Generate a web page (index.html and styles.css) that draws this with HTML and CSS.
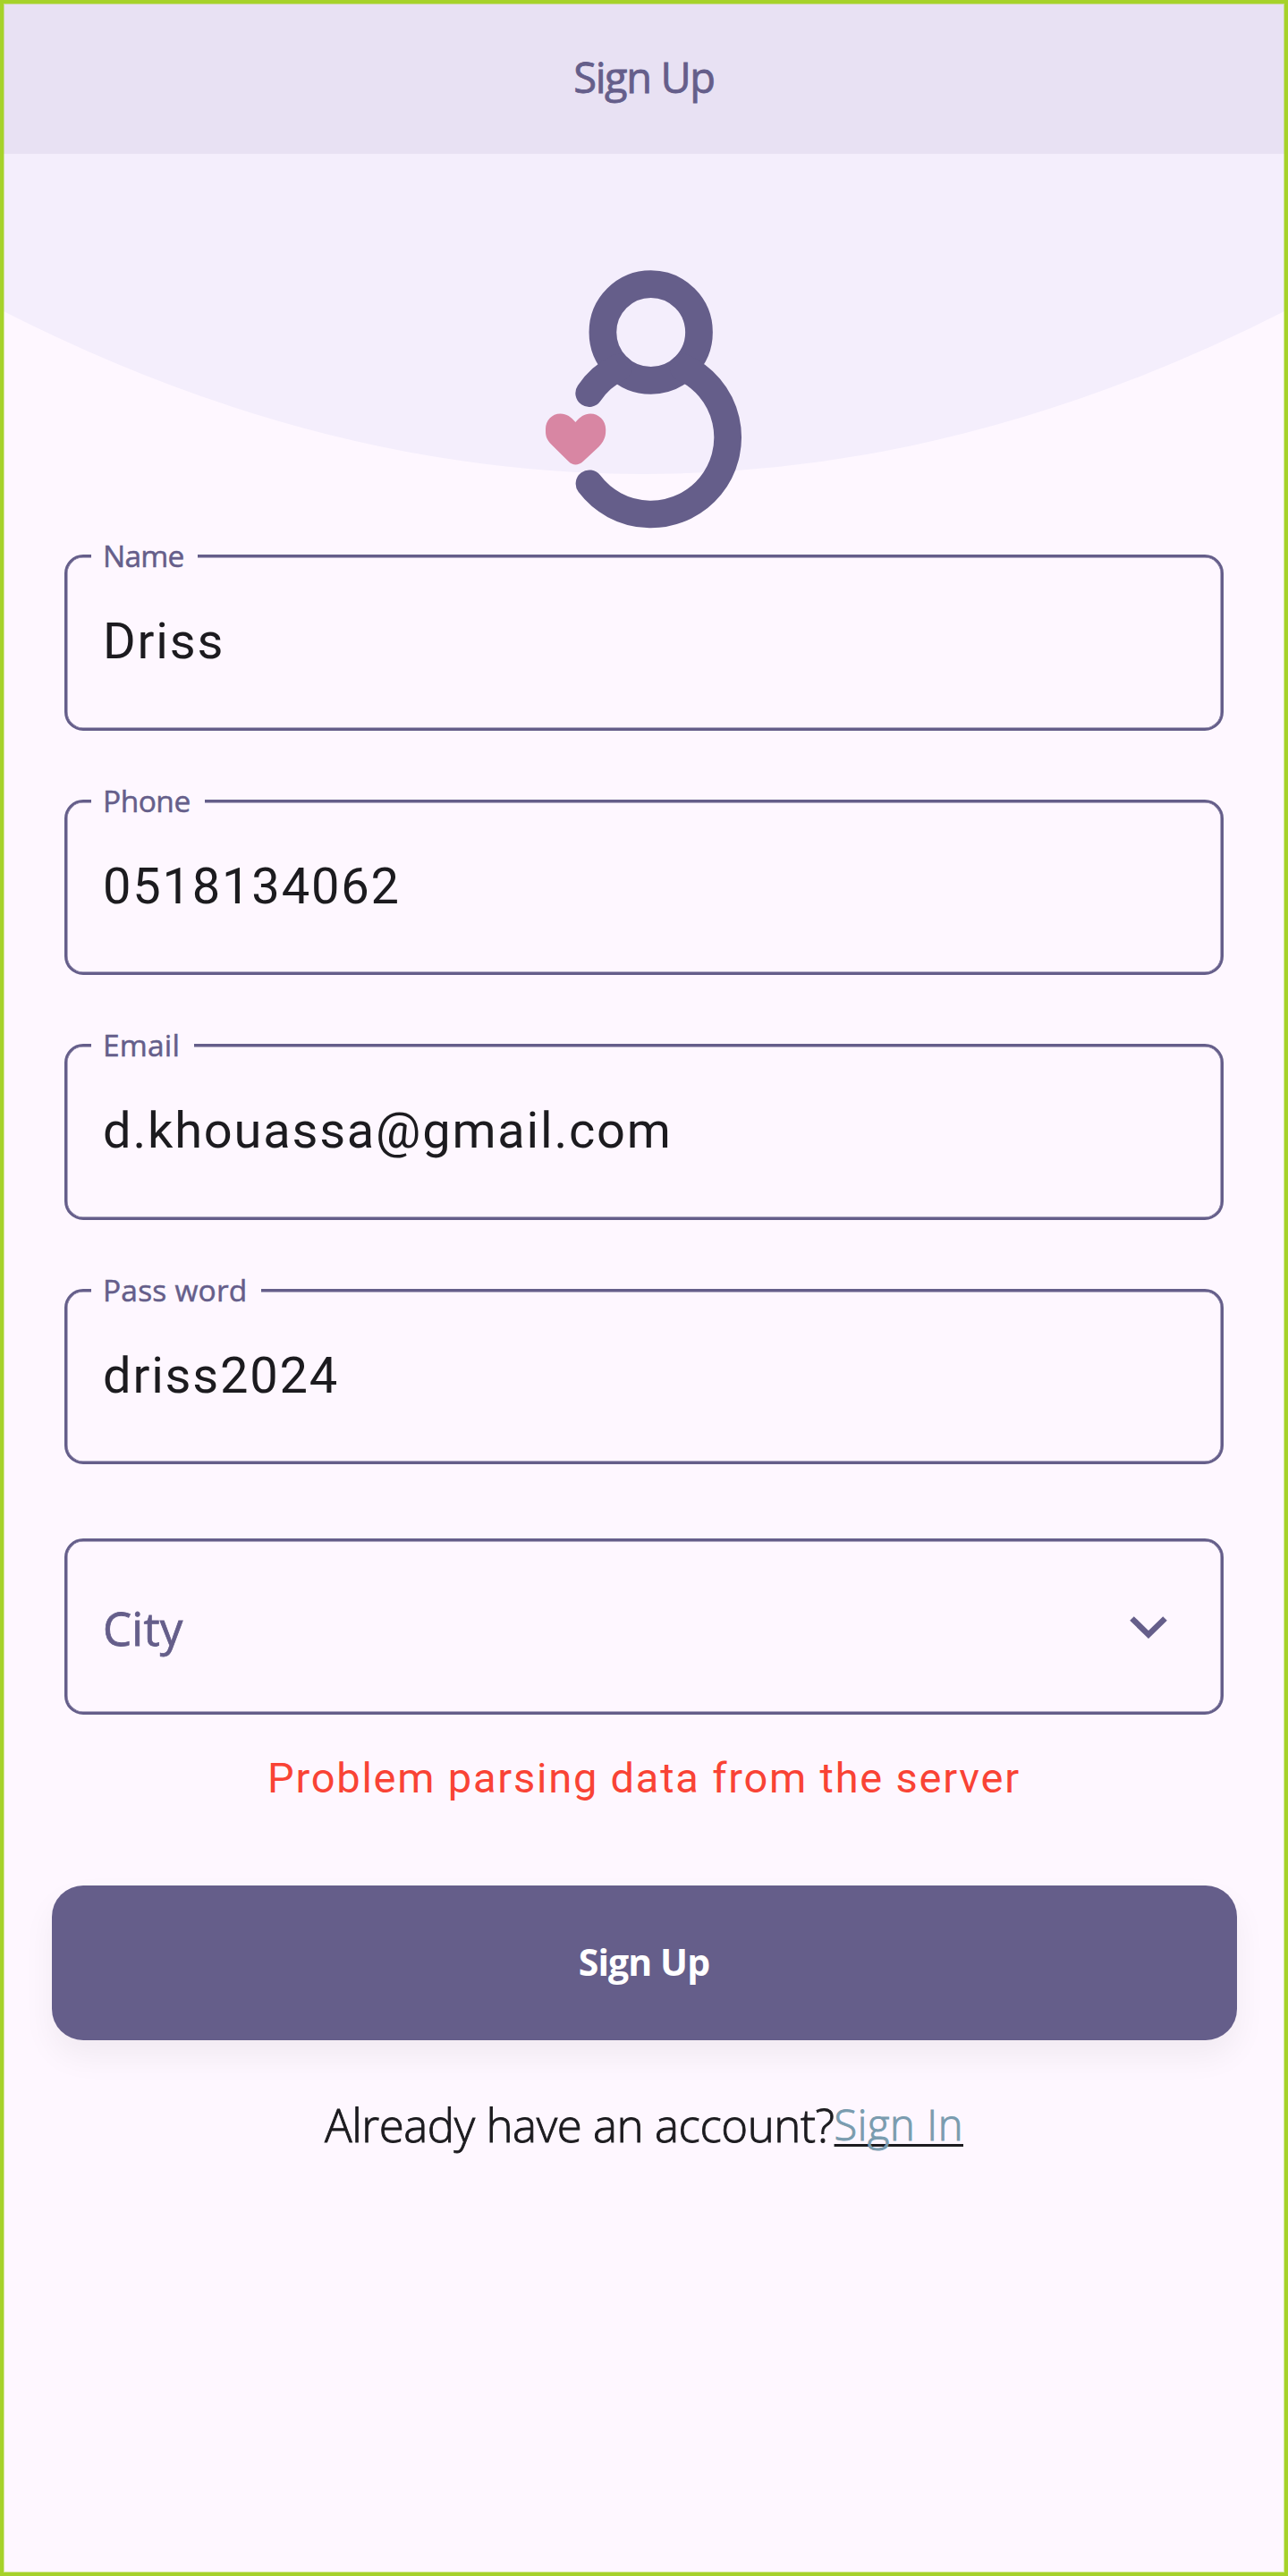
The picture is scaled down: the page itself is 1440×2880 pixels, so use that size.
FILE: index.html
```html
<!DOCTYPE html>
<html lang="en">
<head>
<meta charset="utf-8">
<title>Sign Up</title>
<link rel="stylesheet" href="styles.css">
</head>
<body>
<main class="screen">
  <svg class="backdrop" width="1440" height="540" viewBox="0 0 1440 540"><path d="M0 0H1440V346Q720 714 0 346Z" fill="#f4eefc"/></svg>
  <header class="topbar"><h1 class="title">Sign Up</h1></header>
  <svg class="logo" width="240" height="300" viewBox="600 295 240 300" fill="none">
    <g stroke="#655e8a" stroke-width="30.7" stroke-linecap="round">
      <circle cx="727.7" cy="371.5" r="53.8"/>
      <path d="M658.7 439.600A86 86 0 0 1 691.300 411.100M764.100 411.100A86 86 0 1 1 659 540.800"/>
    </g>
    <path fill="#d886a3" d="M643.4 472C638.5 466 633.5 462.4 626.5 462.4C617 462.4 610 470 610 479.5V482C610 488 611.5 491.5 616 496.500L635.500 515.800C640.500 520.800 646.500 520.800 652 515.800L669.500 499.500C674.500 494 677.200 489 677.200 482V479.500C677.200 470 669.500 462.400 660 462.400C653.500 462.400 648.300 466 643.400 472Z"/>
  </svg>
  <form class="form">
    <div class="field"><label class="label name">Name</label><span class="value">Driss</span></div>
    <div class="field"><label class="label phone">Phone</label><span class="value">0518134062</span></div>
    <div class="field"><label class="label email">Email</label><span class="value">d.khouassa@gmail.com</span></div>
    <div class="field"><label class="label password">Pass word</label><span class="value">driss2024</span></div>
    <div class="field select"><span class="placeholder">City</span>
      <svg class="chevron" width="44" height="28" viewBox="0 0 44 28"><path d="M3.500 3.500L22 21.500L40.500 3.500" fill="none" stroke="#655e8a" stroke-width="6.500"/></svg>
    </div>
  </form>
  <p class="error">Problem parsing data from the server</p>
  <button class="submit" type="button">Sign Up</button>
  <p class="signin"><span class="question">Already have an account?</span><a class="link">Sign In</a></p>
</main>
</body>
</html>
```
FILE: styles.css
```css
* { box-sizing: border-box; margin: 0; padding: 0; }
body { background: #fef7ff; }
.screen {
  position: relative;
  display: flex;
  flex-direction: column;
  width: 1440px;
  height: 2880px;
  overflow: hidden;
  background: #fef7ff;
  font-family: "Open Sans", "Noto Sans", sans-serif;
  color: #655e8a;
}
/* Frame drawn over the screen edges */
.screen::after {
  content: "";
  position: absolute;
  inset: 0;
  border: 4px solid #a6d22a;
  box-shadow: inset 0 0 0 1px rgba(166, 210, 42, .45);
  pointer-events: none;
}
.backdrop { position: absolute; top: 0; left: 0; }
.topbar {
  position: relative;
  display: flex;
  justify-content: center;
  height: 172px;
  padding-top: 53px;
  background: #e8e1f3;
}
.title {
  font-size: 47px;
  line-height: 66px;
  font-weight: 400;
  letter-spacing: -1.400px;
  white-space: nowrap;
  -webkit-text-stroke: .8px currentColor;
}
.logo { position: relative; display: block; margin: 123px 0 0 600px; }
.form { display: flex; flex-direction: column; gap: 77px; margin: 25px 72px 0; }
.field {
  position: relative;
  display: flex;
  align-items: center;
  height: 196.500px;
  padding: 0 0 2px 40px;
  border: 3px solid #655e8a;
  border-radius: 21px;
  box-shadow: inset 0 0 0 .5px #655e8a;
}
.label {
  position: absolute;
  top: -25px;
  left: 27px;
  height: 46px;
  padding-left: 13px;
  background: #fef7ff;
  font-size: 33.500px;
  line-height: 46px;
  font-weight: 400;
  white-space: nowrap;
  -webkit-text-stroke: .5px currentColor;
}
.name { width: 119px; letter-spacing: -.8px; }
.phone { width: 127px; letter-spacing: -.5px; }
.email { width: 115px; letter-spacing: .2px; }
.password { width: 190px; letter-spacing: .2px; }
.value { color: #1c1b1f; font: 56px/66px Roboto, sans-serif; letter-spacing: 1.800px; }
.select { justify-content: space-between; margin-top: 6px; padding: 3px 59px 0 40px; }
.placeholder {
  font-size: 51px;
  line-height: 68px;
  font-weight: 400;
  letter-spacing: .2px;
  -webkit-text-stroke: .8px currentColor;
}
.chevron { display: block; }
.error {
  margin-top: 43px;
  color: #f94335;
  font: 47px/56px Roboto, sans-serif;
  letter-spacing: 1.780px;
  text-align: center;
}
.submit {
  height: 173px;
  margin: 92.500px 57.500px 0;
  padding-bottom: 3px;
  border: 0;
  border-radius: 35px;
  background: #655e8a;
  box-shadow: 0 18px 36px rgba(0, 0, 0, .055);
  color: #fff;
  font: 700 41px/56px "Open Sans", sans-serif;
  letter-spacing: -.9px;
}
.signin { display: flex; align-items: baseline; justify-content: center; margin-top: 59px; white-space: nowrap; }
.question {
  color: #1c1b1f;
  font-size: 51px;
  line-height: 70px;
  font-weight: 300;
  letter-spacing: -.45px;
  -webkit-text-stroke: .9px currentColor;
}
.link {
  position: relative;
  top: -2px;
  color: #7a9caf;
  font-size: 47px;
  font-weight: 300;
  letter-spacing: .6px;
  -webkit-text-stroke: 1px currentColor;
  text-decoration: underline #1c1b1f 3px;
  text-decoration-skip-ink: none;
  text-underline-offset: 4px;
}
```
